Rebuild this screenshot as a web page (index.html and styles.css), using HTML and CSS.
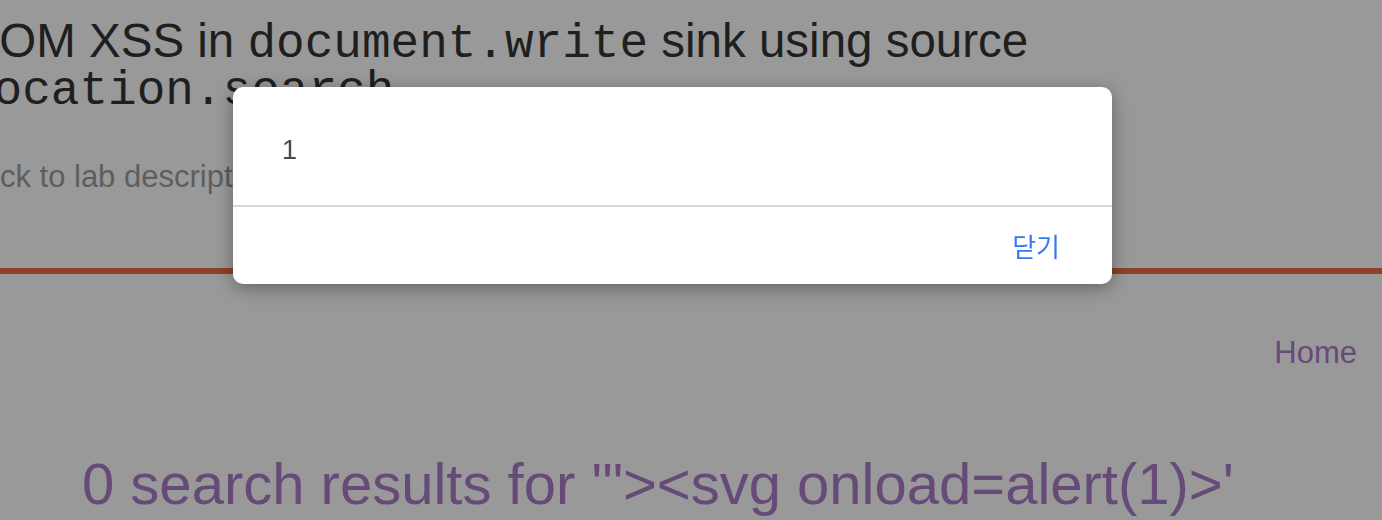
FILE: index.html
```html
<!DOCTYPE html>
<html lang="en">
<head>
<meta charset="utf-8">
<title>DOM XSS in document.write sink using source location.search</title>
<link rel="stylesheet" href="styles.css">
</head>
<body>
<div class="page">
  <header class="lab-header">
    <div class="lab-title-wrap">
      <h2 class="lab-title">DOM XSS in <span class="code">document.write</span> sink using source <span class="code">location.search</span></h2>
      <a class="back-link" href="#">Back to lab description</a>
    </div>
  </header>
  <div class="accent-line"></div>
  <nav class="top-nav">
    <a class="nav-link" href="#">Home</a>
  </nav>
  <section class="results">
    <h1 class="results-title">0 search results for '"&gt;&lt;svg onload=alert(1)&gt;'</h1>
  </section>
</div>

<div class="dialog" role="alertdialog">
  <div class="dialog-body">1</div>
  <div class="dialog-footer">
    <button class="dialog-btn" type="button">닫기</button>
  </div>
</div>
</body>
</html>
```

FILE: styles.css
```css
html, body {
  margin: 0;
  padding: 0;
}

body {
  background: #999999;
  font-family: "Liberation Sans", Arial, sans-serif;
  width: 1382px;
  height: 520px;
  overflow: hidden;
}

.page {
  display: flex;
  flex-direction: column;
}

.lab-title-wrap {
  margin-left: -35px;
  padding-top: 17px;
  display: flex;
  flex-direction: column;
  align-items: flex-start;
}

.lab-title {
  margin: 0;
  font-weight: normal;
  font-size: 47.5px;
  line-height: 47px;
  color: #1f1f1f;
  width: 1100px;
}

.code {
  font-family: "Liberation Mono", "Courier New", monospace;
  font-size: 47.7px;
  line-height: 38px;
}

.back-link {
  margin-top: 48px;
  margin-left: -3px;
  font-size: 31px;
  line-height: 36px;
  color: #5e5e5e;
  text-decoration: none;
}

.accent-line {
  margin-top: 73px;
  height: 6px;
  background: #8f4129;
}

.top-nav {
  margin-top: 61px;
  display: flex;
  justify-content: flex-end;
  padding-right: 25px;
}

.nav-link {
  font-size: 31px;
  line-height: 36px;
  color: #664a7a;
  text-decoration: none;
}

.results {
  margin-top: 80px;
  padding-left: 82px;
}

.results-title {
  margin: 0;
  font-weight: normal;
  font-size: 58px;
  line-height: 66px;
  color: #664a78;
  white-space: nowrap;
}

.dialog {
  position: fixed;
  left: 233px;
  top: 87px;
  width: 879px;
  height: 197px;
  background: #ffffff;
  border-radius: 10px;
  box-shadow: 0 4px 18px rgba(0, 0, 0, 0.35);
  display: flex;
  flex-direction: column;
  overflow: hidden;
}

.dialog-body {
  height: 120px;
  box-sizing: border-box;
  padding: 47px 0 0 49px;
  font-family: "Liberation Sans", Arial, sans-serif;
  font-size: 27px;
  line-height: 32px;
  color: #4a4a4a;
  border-bottom: 2px solid #d9d9d9;
}

.dialog-footer {
  flex: 1;
  display: flex;
  align-items: center;
  justify-content: flex-end;
  padding-right: 52px;
}

.dialog-btn {
  border: 0;
  background: none;
  padding: 0;
  font-family: "Noto Sans CJK KR", "Liberation Sans", sans-serif;
  font-size: 26px;
  line-height: 32px;
  color: #3478f6;
  cursor: pointer;
}
```
